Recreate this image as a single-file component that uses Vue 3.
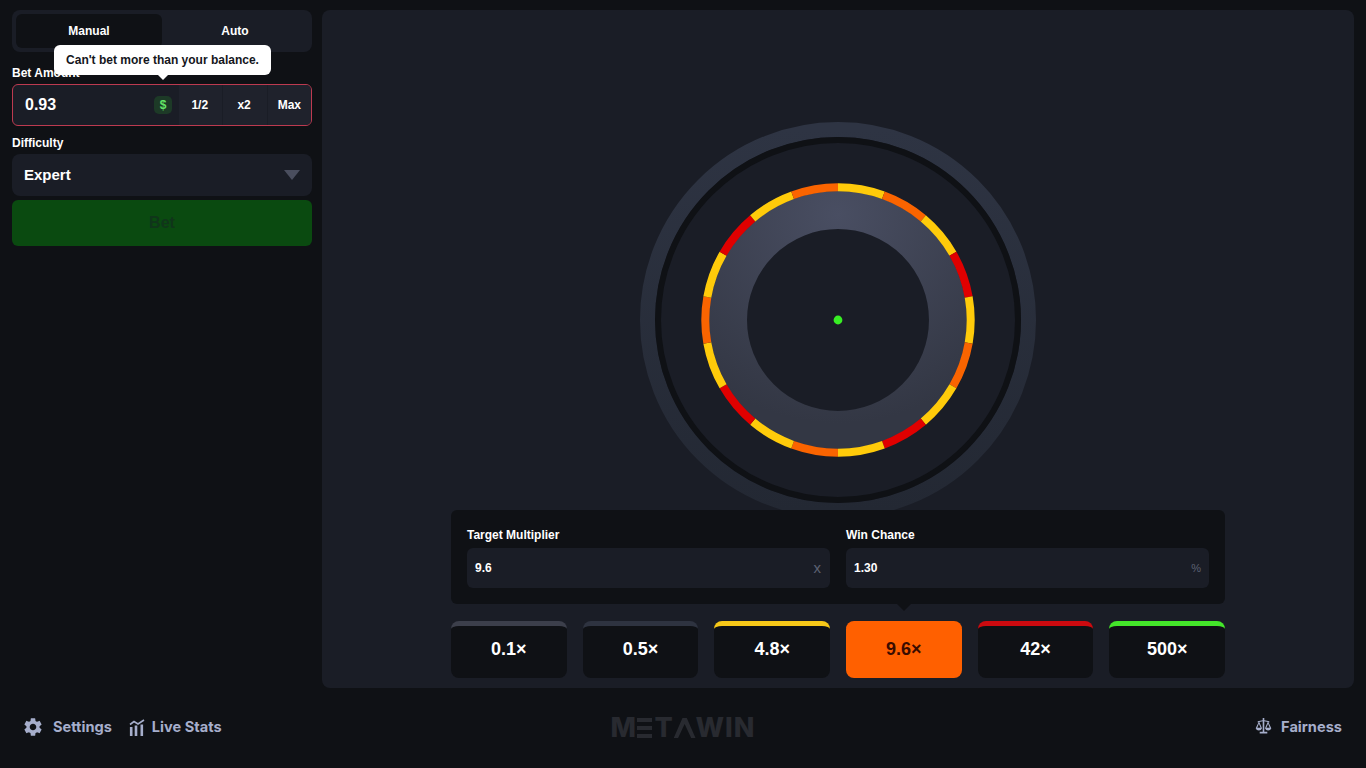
<script setup>
const colors = { y: '#ffcb0a', o: '#fa6400', r: '#e00000' }
const order = ['y','o','y','r','y','o','y','r','y','o','y','r','y','o','y','r','y','o']
const C = 198, R = 132.7
const pt = (deg) => {
  const a = (deg - 90) * Math.PI / 180
  return `${(C + R * Math.cos(a)).toFixed(3)} ${(C + R * Math.sin(a)).toFixed(3)}`
}
const segments = order.map((k, i) => ({
  d: `M${pt(i * 20)}A${R} ${R} 0 0 1 ${pt((i + 1) * 20)}`,
  color: colors[k]
}))
const multipliers = [
  { label: '0.1×', band: 'gray' },
  { label: '0.5×', band: 'slate' },
  { label: '4.8×', band: 'yellow' },
  { label: '9.6×', band: 'active' },
  { label: '42×', band: 'red' },
  { label: '500×', band: 'green' }
]
</script>

<template>
  <div class="page">
    <div class="top">
      <aside class="side">
        <div class="tabs">
          <div class="tab on">Manual</div>
          <div class="tab">Auto</div>
        </div>
        <div class="lab first">Bet Amount</div>
        <div class="amount">
          <div class="tip">Can't bet more than your balance.</div>
          <span class="val">0.93</span>
          <span class="coin">$</span>
          <span class="act">1/2</span>
          <span class="act">x2</span>
          <span class="act">Max</span>
        </div>
        <div class="lab second">Difficulty</div>
        <div class="select">
          <span class="sel-text">Expert</span>
          <i class="caret"></i>
        </div>
        <div class="bet">Bet</div>
      </aside>
      <main class="panel">
        <div class="wheel-area">
          <svg class="wheel" width="396" height="396" viewBox="0 0 396 396">
            <defs>
              <linearGradient id="outerG" x1="0" y1="0" x2="0" y2="1">
                <stop offset="0" stop-color="#2e3443" />
                <stop offset="1" stop-color="#232833" />
              </linearGradient>
              <radialGradient id="innerG" cx="0.5" cy="0.02" r="0.95">
                <stop offset="0" stop-color="#494e62" />
                <stop offset="1" stop-color="#333744" />
              </radialGradient>
            </defs>
            <circle cx="198" cy="198" r="190.5" fill="none" stroke="url(#outerG)" stroke-width="15" />
            <circle cx="198" cy="198" r="180" fill="none" stroke="#0f1115" stroke-width="6" />
            <circle cx="198" cy="198" r="110" fill="none" stroke="url(#innerG)" stroke-width="38" />
            <path v-for="(s, i) in segments" :key="i" :d="s.d" :stroke="s.color" stroke-width="8" fill="none" />
            <circle cx="198" cy="198" r="4.4" fill="#38ee24" />
          </svg>
        </div>
        <div class="bottom">
          <div class="fields">
            <div class="field">
              <div class="flab">Target Multiplier</div>
              <div class="finput"><span>9.6</span><em class="unit x">x</em></div>
            </div>
            <div class="field">
              <div class="flab">Win Chance</div>
              <div class="finput"><span>1.30</span><em class="unit">%</em></div>
            </div>
            <i class="pointer"></i>
          </div>
          <div class="mults">
            <div v-for="m in multipliers" :key="m.label" class="mult" :class="m.band">{{ m.label }}</div>
          </div>
        </div>
      </main>
    </div>
    <footer class="foot">
      <div class="left">
        <span class="link gear">
          <svg width="22" height="22" viewBox="0 0 24 24" fill="#a6aecb"><path d="M19.14 12.94c.04-.3.06-.61.06-.94 0-.32-.02-.64-.07-.94l2.03-1.58a.49.49 0 0 0 .12-.61l-1.92-3.32a.488.488 0 0 0-.59-.22l-2.39.96c-.5-.38-1.03-.7-1.62-.94l-.36-2.54a.484.484 0 0 0-.48-.41h-3.84c-.24 0-.43.17-.47.41l-.36 2.54c-.59.24-1.13.57-1.62.94l-2.39-.96c-.22-.08-.47 0-.59.22L2.74 8.87c-.12.21-.08.47.12.61l2.03 1.58c-.05.3-.09.63-.09.94s.02.64.07.94l-2.03 1.58a.49.49 0 0 0-.12.61l1.92 3.32c.12.22.37.29.59.22l2.39-.96c.5.38 1.03.7 1.62.94l.36 2.54c.05.24.24.41.48.41h3.84c.24 0 .44-.17.47-.41l.36-2.54c.59-.24 1.13-.56 1.62-.94l2.39.96c.22.08.47 0 .59-.22l1.92-3.32c.12-.22.07-.47-.12-.61l-2.01-1.58zM12 15.6c-1.98 0-3.6-1.62-3.6-3.6s1.62-3.6 3.6-3.6 3.6 1.62 3.6 3.6-1.62 3.6-3.6 3.6z"/></svg>
          Settings
        </span>
        <span class="link stats">
          <svg width="16" height="17" viewBox="0 0 16 17" fill="none" stroke="#a6aecb"><path d="M1 5.5 5 2.5 9 5 15 1" stroke-width="1.6"/><path d="M2.2 8v9M7 6.5V17M12.8 5.5V17" stroke-width="2.6"/></svg>
          Live Stats
        </span>
      </div>
      <div class="logo">M<span class="e">E</span>T<span class="a">A</span>WIN</div>
      <div class="right">
        <span class="link">
          <svg width="17" height="18" viewBox="0 0 17 18" fill="#a6aecb"><path d="M7.7 0h1.6v2.2l5 1v1.2l-.9-.2 2.9 6a3.3 3.3 0 0 1-6.3 0l2.7-6.300-3.400-.7v10.600h3v1.700H4.700v-1.700h3V3.200l-3.400.7L7 10.200a3.300 3.300 0 0 1-6.300 0l2.900-6-.9.2V3.200l5-1zM3.900 5.700 2.300 9.800h3.300zm9.200 0-1.700 4.100h3.300z"/></svg>
          Fairness
        </span>
      </div>
    </footer>
  </div>
</template>

<style>
html, body { margin: 0; background: #0f1115; }
</style>

<style scoped>
.page {
  width: 1366px;
  height: 768px;
  background: #0f1115;
  color: #fff;
  font-family: "Liberation Sans", Arial, sans-serif;
  font-weight: 700;
  overflow: hidden;
  display: flex;
  flex-direction: column;
}
.top {
  display: flex;
  gap: 10px;
  padding: 10px 12px 0;
  height: 678px;
}
.side { width: 300px; flex: none; display: flex; flex-direction: column; }
.tabs {
  height: 42px;
  box-sizing: border-box;
  padding: 4px;
  background: #1a1d26;
  border-radius: 8px;
  display: flex;
  font-size: 12px;
}
.tab { flex: 1; display: flex; align-items: center; justify-content: center; border-radius: 6px; }
.tab.on { background: #0f1115; flex: none; width: 146px; }
.lab { font-size: 12px; line-height: 16px; height: 14px; }
.lab.first { margin-top: 13px; margin-bottom: 5px; }
.lab.second { margin-top: 9px; margin-bottom: 5px; }
.amount {
  position: relative;
  height: 42px;
  box-sizing: border-box;
  border: 1px solid #bd3a50;
  border-radius: 6px;
  background: #1a1d26;
  display: flex;
  align-items: stretch;
}
.tip {
  position: absolute;
  left: 41px;
  top: -40px;
  width: 217px;
  height: 30px;
  background: #fff;
  color: #14161c;
  border-radius: 6px;
  font-size: 12px;
  line-height: 30px;
  text-align: center;
  z-index: 2;
}
.tip::after {
  content: "";
  position: absolute;
  left: 104px;
  bottom: -5px;
  border-left: 5px solid transparent;
  border-right: 5px solid transparent;
  border-top: 5px solid #fff;
}
.val { flex: 1; font-size: 16px; line-height: 40px; padding-left: 12px; }
.coin {
  align-self: center;
  width: 18px;
  height: 18px;
  margin-right: 6px;
  border-radius: 5px;
  background: #1d3a27;
  color: #62e466;
  font-size: 12px;
  line-height: 18px;
  text-align: center;
}
.act {
  width: 44.3px;
  background: #1f222c;
  border-left: 1px solid #1a1d26;
  box-sizing: border-box;
  padding-right: 2px;
  font-size: 12px;
  line-height: 40px;
  text-align: center;
}
.act:last-child { border-radius: 0 5px 5px 0; padding-right: 0; }
.select {
  height: 42px;
  border-radius: 8px;
  background: #1a1d26;
  display: flex;
  align-items: center;
  justify-content: space-between;
  padding: 0 12px;
  font-size: 15px;
}
.sel-text { margin-top: -2px; }
.caret {
  border-left: 8px solid transparent;
  border-right: 8px solid transparent;
  border-top: 10px solid #4a4e5e;
}
.bet {
  margin-top: 4px;
  height: 46px;
  border-radius: 6px;
  background: #0a4a10;
  color: #10351a;
  font-size: 16px;
  line-height: 46px;
  text-align: center;
}
.panel {
  flex: 1;
  background: #1a1d26;
  border-radius: 8px;
  display: flex;
  flex-direction: column;
}
.wheel-area {
  height: 500px;
  overflow: hidden;
  display: flex;
  justify-content: center;
  padding-top: 111.5px;
  box-sizing: border-box;
}
.wheel { flex: none; }
.bottom { width: 774px; margin-left: 129px; }
.fields {
  position: relative;
  height: 94px;
  box-sizing: border-box;
  background: #0f1115;
  border-radius: 6px;
  padding: 16px;
  display: flex;
  gap: 16px;
}
.pointer {
  position: absolute;
  left: 446px;
  bottom: -7px;
  border-left: 7px solid transparent;
  border-right: 7px solid transparent;
  border-top: 7px solid #0f1115;
}
.field { flex: 1; }
.flab { font-size: 12px; line-height: 18px; height: 16px; margin-bottom: 6px; }
.finput {
  height: 40px;
  border-radius: 6px;
  background: #1a1d26;
  display: flex;
  align-items: center;
  justify-content: space-between;
  padding: 0 8px;
  font-size: 12px;
}
.unit { font-style: normal; font-weight: 400; color: #5c6172; font-size: 11px; }
.unit.x { font-size: 15px; margin-top: -2px; margin-right: 1px; }
.mults { display: flex; gap: 16px; margin-top: 17px; }
.mult {
  flex: 1;
  height: 57px;
  box-sizing: border-box;
  border-radius: 8px;
  background: #0f1115;
  border-top: 5px solid #3c3f4b;
  font-size: 18px;
  line-height: 46px;
  text-align: center;
}
.mult.slate { border-top-color: #2e3340; }
.mult.yellow { border-top-color: #f7c818; }
.mult.red { border-top-color: #cc0a0f; }
.mult.green { border-top-color: #44e62a; }
.mult.active { background: #ff6000; border-top-color: #ff6000; color: #3a0c00; }
.foot {
  flex: 1;
  display: grid;
  grid-template-columns: 1fr auto 1fr;
  align-items: center;
  padding: 0 24px 2px;
  color: #a6aecb;
  font-family: Inter, "Liberation Sans", sans-serif;
  font-size: 14.6px;
  font-weight: 700;
}
.left { display: flex; gap: 17px; }
.right { display: flex; justify-content: flex-end; }
.link { display: inline-flex; align-items: center; gap: 9px; }
.gear { margin-left: -2px; }
.stats { gap: 7px; }
.logo {
  color: #282a30;
  font-size: 27px;
  font-weight: 800;
  letter-spacing: 1px;
  line-height: 30px;
  margin-top: 2px;
}
.logo .e {
  display: inline-block;
  color: transparent;
  background: linear-gradient(#282a30 0 4px, transparent 4px 8px, #282a30 8px 12px, transparent 12px 16px, #282a30 16px 20px) no-repeat 0 5px / calc(100% - 2px) 20px;
}
.logo .a {
  display: inline-block;
  color: transparent;
  background: #282a30;
  clip-path: polygon(40% 17%, 60% 17%, 100% 83%, 80% 83%, 50% 37%, 20% 83%, 0 83%);
}
</style>
